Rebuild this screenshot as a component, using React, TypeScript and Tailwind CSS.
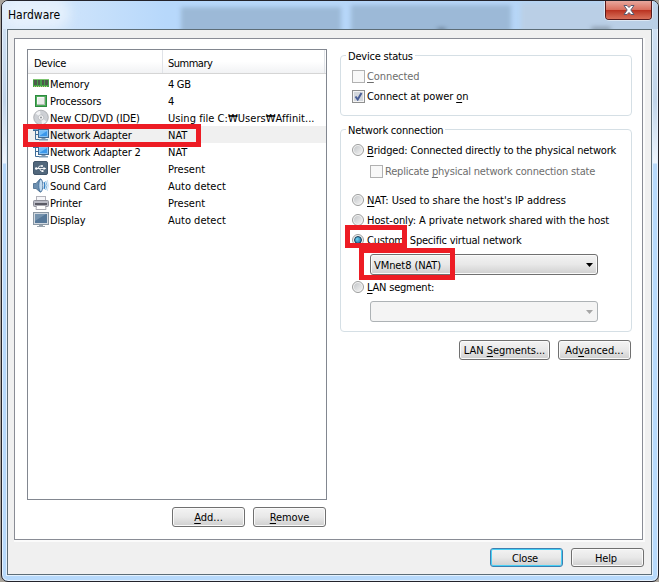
import React from 'react';

interface DeviceRow {
  icon: React.ReactNode;
  name: string;
  summary: string;
  summaryClass?: string;
}

const MemoryIcon = () => (
  <svg width="16" height="17" viewBox="0 0 16 17" className="shrink-0" shapeRendering="crispEdges">
    <rect x="0" y="4" width="16" height="8" fill="#43a047" />
    <rect x="0" y="4" width="16" height="1" fill="#7cc470" />
    <rect x="1" y="5" width="3" height="5" fill="#4c5a4a" />
    <rect x="5" y="5" width="2" height="5" fill="#4c5a4a" />
    <rect x="9" y="5" width="2" height="5" fill="#4c5a4a" />
    <rect x="12" y="5" width="3" height="5" fill="#4c5a4a" />
    <path d="M1 11.5h14" stroke="#b9d27c" strokeDasharray="1 1" />
  </svg>
);

const CpuIcon = () => (
  <svg width="16" height="17" viewBox="0 0 16 17" className="shrink-0" shapeRendering="crispEdges">
    <rect x="2" y="3" width="12" height="12" fill="#2d8a3f" />
    <rect x="3" y="4" width="10" height="10" fill="#4fae5c" />
    <rect x="4" y="5" width="8" height="8" fill="#b4bdb5" />
    <rect x="4" y="5" width="7" height="7" fill="#f8f8f8" />
    <rect x="5" y="6" width="6" height="6" fill="#e9ebe9" />
  </svg>
);

const DiscIcon = () => (
  <svg width="16" height="17" viewBox="0 0 16 17" className="shrink-0">
    <circle cx="8" cy="8.500" r="7.300" fill="#cdd0d5" stroke="#a3a6aa" strokeWidth="0.8" />
    <path d="M8 8.500 2.500 4.500A7 7 0 0 1 7 1.700z" fill="#f1f2f4" />
    <path d="M8 8.500l5.500 4A7 7 0 0 1 9 15.300z" fill="#f1f2f4" />
    <circle cx="8" cy="8.500" r="2.700" fill="#f5f6f7" stroke="#adb0b5" strokeWidth="0.7" />
    <circle cx="8" cy="8.500" r="1" fill="#8c9096" />
  </svg>
);

const NetIcon = () => (
  <svg width="16" height="17" viewBox="0 0 16 17" className="shrink-0">
    <path d="M0 4.500h5M2.500 4v9.500M2.500 8.500h3M2.500 13.500h4" stroke="#3f6d99" fill="none" />
    <rect x="0" y="3" width="5" height="1" fill="#6f98bf" />
    <rect x="5.500" y="3.500" width="10" height="8" fill="#3b97ea" stroke="#41698f" />
    <rect x="6.500" y="4.500" width="8" height="6" fill="none" stroke="#a9d4f8" strokeWidth="0.7" />
    <path d="M7 5h7l-7 4.500z" fill="#73bdf8" />
    <path d="M8.500 12h4v1H15v1.500H6V13h2.500z" fill="#7d9bb6" />
  </svg>
);

const UsbIcon = () => (
  <svg width="16" height="17" viewBox="0 0 16 17" className="shrink-0">
    <rect x="0.500" y="1.500" width="14" height="13" rx="1.500" fill="#51677c" stroke="#42566a" />
    <path d="M3 8.500h8M5 8.500l1.500-2.500h2M6.500 8.500l1.500 2.500h1.500" stroke="#fff" fill="none" strokeWidth="0.9" />
    <circle cx="3.300" cy="8.500" r="1.300" fill="#fff" />
    <path d="M10.500 7l2.800 1.500-2.800 1.500z" fill="#fff" />
    <circle cx="9" cy="6" r="1" fill="#fff" />
    <rect x="8.700" y="10.200" width="1.800" height="1.800" fill="#fff" />
  </svg>
);

const SoundIcon = () => (
  <svg width="16" height="17" viewBox="0 0 16 17" className="shrink-0">
    <path d="M.5 6.500h2.500L7 2h1v13H7L3 11.500H.5z" fill="#6c8fb0" stroke="#45678a" strokeWidth="0.8" />
    <ellipse cx="7.800" cy="8.500" rx="2" ry="6.300" fill="#c4dcf0" stroke="#3a6794" strokeWidth="0.8" />
    <path d="M11 5q1.800 3.500 0 7" stroke="#2f7fc4" fill="none" strokeWidth="1.200" />
    <path d="M12.700 4q2.600 4.500 0 9" stroke="#7db4df" fill="none" />
    <path d="M14.300 3q2.200 5.500 0 11" stroke="#b5d4ec" fill="none" strokeWidth="0.8" />
  </svg>
);

const PrinterIcon = () => (
  <svg width="16" height="17" viewBox="0 0 16 17" className="shrink-0">
    <rect x="3.500" y="2.500" width="9" height="5" fill="#f5f5f8" stroke="#b2b2ba" />
    <rect x="0.500" y="6.500" width="15" height="6" rx="1" fill="#b9bac4" stroke="#8d8e98" />
    <rect x="2" y="9" width="12" height="2" fill="#5b5b66" />
    <path d="M3.500 11.500h9l.5 4h-10z" fill="#fff" stroke="#ababb3" />
  </svg>
);

const DisplayIcon = () => (
  <svg width="16" height="17" viewBox="0 0 16 17" className="shrink-0">
    <rect x="0.500" y="1.500" width="15" height="12" fill="#d3dae1" stroke="#8a97a3" />
    <rect x="2" y="3" width="12" height="9" fill="#567899" />
    <path d="M2 3h11L2 10z" fill="#7593ae" />
    <path d="M6 14h4v1h2v1H4v-1h2z" fill="#98a3ad" />
  </svg>
);

const devices: DeviceRow[] = [
  { icon: <MemoryIcon />, name: 'Memory', summary: '4 GB', summaryClass: 'tracking-[-0.3px]' },
  { icon: <CpuIcon />, name: 'Processors', summary: '4' },
  { icon: <DiscIcon />, name: 'New CD/DVD (IDE)', summary: 'Using file C:₩Users₩Affinit...', summaryClass: 'tracking-[0.05px]' },
  { icon: <NetIcon />, name: 'Network Adapter', summary: 'NAT' },
  { icon: <NetIcon />, name: 'Network Adapter 2', summary: 'NAT' },
  { icon: <UsbIcon />, name: 'USB Controller', summary: 'Present' },
  { icon: <SoundIcon />, name: 'Sound Card', summary: 'Auto detect' },
  { icon: <PrinterIcon />, name: 'Printer', summary: 'Present' },
  { icon: <DisplayIcon />, name: 'Display', summary: 'Auto detect' },
];

const Key = ({ children }: { children: React.ReactNode }) => (
  <span className="underline decoration-1 underline-offset-2">{children}</span>
);

interface ButtonProps {
  className: string;
  primary?: boolean;
  children: React.ReactNode;
}

const Button = ({ className, primary, children }: ButtonProps) => (
  <button
    className={`flex items-center justify-center rounded-[3px] border bg-linear-to-b from-[#f3f3f3] from-0% via-[#e8e8e8] via-50% to-[#cfcfcf] whitespace-nowrap ${
      primary ? 'border-[#3c7fb1] shadow-[inset_0_0_0_1px_#48d0f5]' : 'border-[#707070] shadow-[inset_0_0_0_1px_#fafafa]'
    } ${className}`}
  >
    <span>{children}</span>
  </button>
);

const CheckBox = ({ checked, disabled }: { checked?: boolean; disabled?: boolean }) => (
  <span className={`h-[13px] w-[13px] shrink-0 border p-px ${disabled ? 'border-[#b1b1b1] bg-[#f8f8f8]' : 'border-[#8e8f8f] bg-[#f4f4f4]'}`}>
    {checked ? (
      <svg width="9" height="9" viewBox="0 0 9 9" className="block bg-[#d3d7dc]">
        <path d="M1.500 4.500l2.200 3L7.500 1" fill="none" stroke="#4a5f97" strokeWidth="2" />
      </svg>
    ) : null}
  </span>
);

const Radio = ({ checked }: { checked?: boolean }) => (
  <span className="flex h-3 w-3 shrink-0 items-center justify-center rounded-full border border-[#9c9d9d] bg-[#f4f4f4]">
    {checked ? (
      <span className="h-2 w-2 rounded-full border border-[#123954] bg-radial-[at_35%_35%] from-[#6fd0f0] to-[#0f5f92]" />
    ) : (
      <span className="h-2 w-2 rounded-full bg-linear-to-br from-[#c4c7ca] to-[#f2f2f2]" />
    )}
  </span>
);

const Combo = ({ value, disabled }: { value?: string; disabled?: boolean }) => (
  <div
    className={`ml-[18px] flex h-[21px] w-[228px] items-center justify-between rounded-[3px] border pr-1 pl-[3px] ${
      disabled
        ? 'border-[#adb2b5] bg-[#f4f4f4]'
        : 'border-[#707070] bg-linear-to-b from-[#f2f2f2] via-[#e8e8e8] to-[#cfcfcf] shadow-[inset_0_0_0_1px_#fafafa]'
    }`}
  >
    <span className="pt-px tracking-[-0.08px]">{value}</span>
    <svg width="7" height="4" viewBox="0 0 7 4">
      <path d="M0 0h7L3.500 4z" fill={disabled ? '#a6a6a6' : '#000'} />
    </svg>
  </div>
);

const Group = ({ title, className, children }: { title: string; className: string; children: React.ReactNode }) => (
  <section className={`relative w-[292px] rounded-[4px] border border-[#d5dfe5] pl-[11px] ${className}`}>
    <h2 className="absolute -top-[7px] left-[5px] bg-white px-[2px] leading-4 tracking-[-0.2px] whitespace-nowrap">{title}</h2>
    {children}
  </section>
);

// Soft shapes of the desktop that show through the glass title bar
const GlassBackdrop = () => (
  <div className="absolute inset-0 overflow-hidden">
    <div className="absolute top-[6px] left-[179px] h-8 w-[160px] bg-[#9cb9d7] blur-[2px]" />
    <div className="absolute top-[4px] left-[349px] h-8 w-[160px] bg-[#9cb9d7] blur-[2px]" />
    <div className="absolute top-[2px] left-[519px] h-8 w-[150px] bg-[#bacfe6] blur-[2px]" />
    <div className="absolute top-[27px] left-[435px] h-[3px] w-[9px] rounded-full bg-[#54687c]/80 blur-[2px]" />
    <div className="absolute top-[26px] left-[589px] h-1 w-[20px] rounded-full bg-[#7d8c9c]/80 blur-[2px]" />
    <div className="absolute -top-1 left-[2px] h-8 w-[66px] rounded-full bg-[#eaf3fd]/80 blur-[6px]" />
  </div>
);

export default function App() {
  return (
    <div className="relative h-[582px] w-[659px] overflow-hidden bg-[#a9a49c] pl-px font-['DejaVu_Sans_Condensed','DejaVu_Sans','Noto_Sans_CJK_KR',sans-serif] text-[11px] leading-[17px] text-black">
      <div className="flex h-[582px] flex-col overflow-hidden rounded-[7px] border border-[#23232b] bg-[linear-gradient(to_bottom,#d3e3f5_0px,#c1d5ea_100px,#eef5fd_162px,#b7d9fb_163px)] shadow-[inset_0_0_0_1px_#e6f1fc]">
        <header className="relative flex h-[28px] shrink-0 items-start justify-between bg-linear-to-r from-[#dcebfb] via-[#b7d8fb] via-25% to-[#b7d5f5] pr-[6px] pl-[6px]">
          <GlassBackdrop />
          <h1 className="relative pt-[6px] text-[12px] leading-[17px]">Hardware</h1>
          <button className="relative flex h-[19px] w-[47px] items-center justify-center rounded-b-[4px] border border-t-0 border-[#58191b] bg-linear-to-b from-[#e7a79d] from-0% via-[#d9705f] via-48% to-[#d67055] shadow-[0_0_0_1px_#ffffff80]">
            <span className="absolute inset-x-0 top-[9px] bottom-0 rounded-b-[3px] bg-linear-to-b from-[#b92f1e] to-[#d8705a]" />
            <svg width="12" height="10" viewBox="0 0 12 10" className="relative">
              <path d="M1 .5h3l2 2 2-2h3L7.800 5 11 9.500H8l-2-2-2 2H1L4.200 5z" fill="#fff" stroke="#575b72" strokeWidth="1" />
            </svg>
          </button>
        </header>
        <div className="mr-[6px] ml-[5px] flex h-[546px] flex-col border border-[#5d6d77] bg-[#f0f0f0] px-[6px] pt-2 shadow-[0_0_0_1px_#e4f1fd]">
          <div className="flex h-[502px] w-[629px] shrink-0 border border-[#898c95] bg-white pt-[10px] pl-3 shadow-[1px_1px_0_1px_#fbfbfb]">
            <div className="flex w-[300px] flex-col">
              <div className="h-[451px] border border-[#828790]">
                <div className="flex h-6 w-[298px] border-b border-[#d5d5d5] bg-linear-to-b from-white from-50% to-[#f1f2f4] leading-[27px]">
                  <span className="w-[135px] border-r border-[#e0e3e8] pl-[6px] tracking-[-0.3px]">Device</span>
                  <span className="w-[162px] border-r border-[#e0e3e8] pl-[5px] tracking-[-0.5px]">Summary</span>
                </div>
                <ul className="pt-px">
                  {devices.map((d, i) => (
                    <li key={d.name} className={`flex h-[17px] items-start pl-[5px] leading-[18px] whitespace-nowrap ${i === 3 ? 'bg-[#f0f0f0]' : ''}`}>
                      {d.icon}
                      <span className="w-[119px] pt-px pl-px tracking-[-0.14px]">{d.name}</span>
                      <span className={`pt-px ${d.summaryClass ?? ''}`}>{d.summary}</span>
                    </li>
                  ))}
                </ul>
              </div>
              <div className="mt-[7px] flex justify-end gap-2 pr-px">
                <Button className="h-5 w-[73px]"><Key>A</Key>dd...</Button>
                <Button className="h-5 w-[73px] tracking-[-0.1px]"><Key>R</Key>emove</Button>
              </div>
            </div>
            <div className="ml-[13px] flex w-[292px] flex-col pt-[6px]">
              <Group title="Device status" className="h-[61px] pt-[10px]">
                <div className="flex h-5 items-center gap-[2px] text-[#6d6d6d]">
                  <CheckBox disabled />
                  <span className="tracking-[-0.1px]"><Key>C</Key>onnected</span>
                </div>
                <div className="flex h-5 items-center gap-[2px]">
                  <CheckBox checked />
                  <span className="tracking-[-0.1px]">Connect at power <Key>o</Key>n</span>
                </div>
              </Group>
              <Group title="Network connection" className="mt-[13px] h-[203px] pt-[10px]">
                <div className="flex h-5 items-center gap-[3px] whitespace-nowrap">
                  <Radio />
                  <span className="tracking-[-0.17px]"><Key>B</Key>ridged: Connected directly to the physical network</span>
                </div>
                <div className="ml-[18px] flex h-[23px] items-center gap-[2px] whitespace-nowrap text-[#6d6d6d]">
                  <CheckBox disabled />
                  <span className="tracking-[-0.2px]">Replicate <Key>p</Key>hysical network connection state</span>
                </div>
                <div className="mt-[7px] flex h-5 items-center gap-[3px]">
                  <Radio />
                  <span><Key>N</Key>AT: Used to share the host's IP address</span>
                </div>
                <div className="flex h-5 items-center gap-[3px] whitespace-nowrap">
                  <Radio />
                  <span className="tracking-[-0.08px]"><Key>H</Key>ost-only: A private network shared with the host</span>
                </div>
                <div className="flex h-5 items-center gap-[3px]">
                  <Radio checked />
                  <span className="tracking-[-0.2px]">Custom: Specific virtual network</span>
                </div>
                <div className="pt-1"><Combo value="VMnet8 (NAT)" /></div>
                <div className="mt-[2px] flex h-5 items-center gap-[3px]">
                  <Radio />
                  <span className="tracking-[-0.22px]"><Key>L</Key>AN segment:</span>
                </div>
                <div className="pt-1"><Combo disabled /></div>
              </Group>
              <div className="mt-2 flex justify-end gap-2 pr-px">
                <Button className="h-5 w-[91px] tracking-[-0.06px]">LAN <Key>S</Key>egments...</Button>
                <Button className="h-5 w-[73px]">Ad<Key>v</Key>anced...</Button>
              </div>
            </div>
          </div>
          <div className="mt-2 flex justify-end gap-2 pr-px">
            <Button primary className="h-[19px] w-[73px] pt-[2px] pr-[3px] tracking-[-0.2px]">Close</Button>
            <Button className="h-[19px] w-[73px] pt-[2px] pr-[3px] tracking-[-0.2px]">Help</Button>
          </div>
        </div>
      </div>

      {/* callouts drawn over the dialog */}
      <div className="absolute top-[124px] left-[23px] h-[23px] w-[178px] border-[5px] border-[#ed1c24]" />
      <div className="absolute top-[225px] left-[345px] h-[23px] w-[62px] border-[5px] border-[#ed1c24]" />
      <div className="absolute top-[248px] left-[359px] h-8 w-[96px] border-[5px] border-[#ed1c24]" />
    </div>
  );
}
